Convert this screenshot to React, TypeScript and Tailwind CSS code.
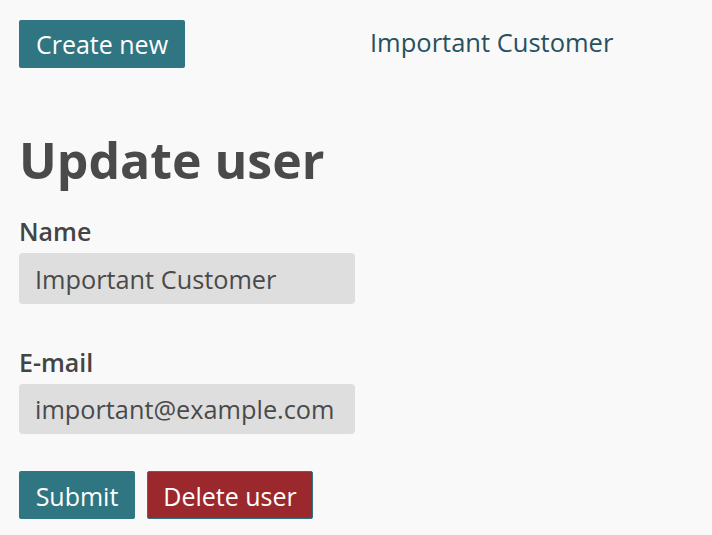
export default function App() {
  return (
    <div className="min-h-[535px] bg-[#f9f9f9] px-[19px] pt-[20px] font-['Open_Sans',sans-serif] text-[#4a4a4a]">
      <header className="flex items-center">
        <button className="h-[48px] w-[166px] rounded-[2px] bg-[#307582] pt-[2px] text-[25px] text-white">
          Create new
        </button>
        <span className="ml-[185px] -mt-[4px] text-[25.5px] text-[#28505e]">Important Customer</span>
      </header>

      <h1 className="mt-[62px] text-[50px] font-bold leading-[60px]">Update user</h1>

      <form className="mt-[26px] flex flex-col">
        <label className="text-[25px] font-semibold leading-[30px] text-[#444]">Name</label>
        <input
          readOnly
          value="Important Customer"
          className="mt-[7px] h-[51px] w-[336px] rounded-[4px] bg-[#dedede] px-[16px] text-[25.3px] text-[#4a4a4a] outline-none"
        />

        <label className="mt-[43px] text-[25px] font-semibold leading-[30px] text-[#444]">E-mail</label>
        <input
          readOnly
          value="important@example.com"
          className="mt-[7px] h-[50px] w-[336px] rounded-[4px] bg-[#dedede] px-[16px] text-[25.3px] text-[#4a4a4a] outline-none"
        />

        <div className="mt-[37px] flex gap-[12px]">
          <button type="button" className="h-[48px] w-[116px] rounded-[2px] bg-[#307582] pt-[3px] text-[25px] text-white">
            Submit
          </button>
          <button
            type="button"
            className="h-[48px] w-[166px] rounded-[2px] border border-[#307582] bg-[#9b282d] pt-[3px] text-[25px] text-white"
          >
            Delete user
          </button>
        </div>
      </form>
    </div>
  );
}
